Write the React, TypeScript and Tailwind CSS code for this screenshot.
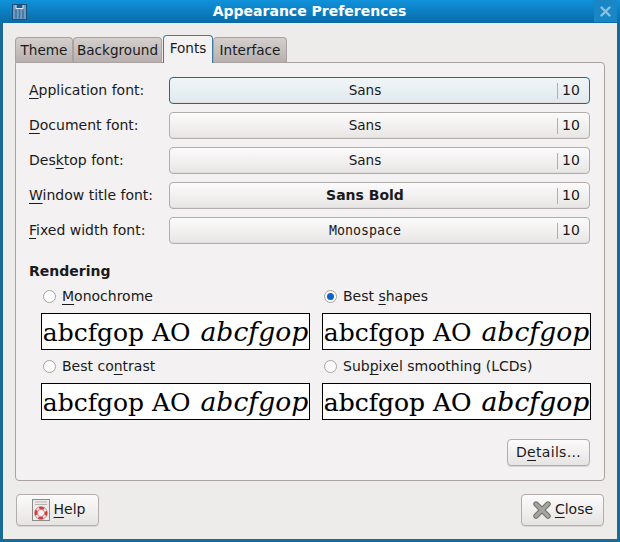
const sans = "font-['DejaVu_Sans',sans-serif]";

function U({ children }: { children: string }) {
  return <span className="underline decoration-1 underline-offset-[3px]">{children}</span>;
}

function Tab({ label, active, width }: { label: string; active?: boolean; width: string }) {
  if (active) {
    return (
      <div className={`relative z-10 -mb-px flex h-[28px] items-center justify-center rounded-t-[4px] border border-b-0 border-[#3b7ea5] bg-[#f3f1f2] pb-[2px] text-[13.6px] text-[#1a1a1a] ${width}`}>
        {label}
      </div>
    );
  }
  return (
    <div className={`flex h-[25px] items-center justify-center rounded-t-[4px] border border-b-0 border-[#a9a2a0] bg-gradient-to-b from-[#d4cfcd] to-[#b7b0ae] text-[13.6px] text-[#1a1a1a] ${width}`}>
      {label}
    </div>
  );
}

function FontRow({ label, font, bold, focus, mono }: { label: React.ReactNode; font: string; bold?: boolean; focus?: boolean; mono?: boolean }) {
  return (
    <div className="flex h-[27px] items-center">
      <div className="w-[140px] shrink-0 text-[14px] text-[#1a1a1a]">{label}</div>
      <div
        className={`flex h-[27px] w-[421px] items-center rounded-[4px] border shadow-[inset_0_-1px_0_#e0dedd] ${
          focus
            ? "border-[1.5px] border-[#1c6a97] bg-gradient-to-b from-[#f0f5f8] to-[#e1e9ee]"
            : "border-[#b3adab] bg-gradient-to-b from-[#fcfbfb] to-[#e8e6e5]"
        }`}
      >
        <div className={`flex-1 pl-[3px] text-center text-[#1a1a1a] ${bold ? "text-[14px] font-bold" : ""} ${mono ? "font-['DejaVu_Sans_Mono',monospace] text-[13.3px]" : "text-[13.6px]"}`}>
          {font}
        </div>
        <div className="h-[16px] w-px bg-[#b3adab]" />
        <div className="w-[31px] pl-[4px] text-left text-[14px] text-[#1a1a1a]">10</div>
      </div>
    </div>
  );
}

function Radio({ checked }: { checked?: boolean }) {
  return (
    <span className="flex h-[13px] w-[13px] shrink-0 items-center justify-center rounded-full border border-[#a8a3a1] bg-[#fdfdfd]">
      {checked && <span className="h-[7px] w-[7px] rounded-full bg-[#0f63c4]" />}
    </span>
  );
}

function Preview({ fringe }: { fringe?: boolean }) {
  return (
    <div
      className="flex h-[37px] w-[269px] items-baseline justify-center overflow-hidden whitespace-nowrap border border-black bg-white pt-[5px] font-['DejaVu_Serif',serif] text-[25px] leading-none text-black"
      style={fringe ? { textShadow: "0.4px 0 0 rgba(210,130,0,.25), -0.4px 0 0 rgba(0,100,210,.25)" } : undefined}
    >
      <span>abcfgop AO</span>
      <i className="ml-[10px] text-[26.6px]">abcfgop</i>
    </div>
  );
}

function Option({ label, checked, fringe }: { label: React.ReactNode; checked?: boolean; fringe?: boolean }) {
  return (
    <div className="flex flex-col">
      <div className="flex h-[33px] items-center gap-[6px] pl-[2px] text-[14px] text-[#1a1a1a]">
        <Radio checked={checked} />
        <span>{label}</span>
      </div>
      <Preview fringe={fringe} />
    </div>
  );
}

function PushButton({ children, className }: { children: React.ReactNode; className: string }) {
  return (
    <div className={`flex items-center justify-center rounded-[4px] border border-[#b3adab] bg-gradient-to-b from-[#fcfbfb] to-[#e6e4e3] text-[14px] text-[#1a1a1a] shadow-[0_1px_0_#d8d6d5] ${className}`}>
      {children}
    </div>
  );
}

function HelpIcon() {
  return (
    <svg width="18" height="22" viewBox="0 0 18 22" className="shrink-0">
      <rect x="0.5" y="0.5" width="17" height="21" fill="#eeecea" stroke="#8d8b88" />
      <path d="M3 3h12M3 5.5h12" stroke="#b5b3b0" strokeWidth="1" />
      <circle cx="9" cy="14" r="5" fill="none" stroke="#efeae8" strokeWidth="2.6" />
      <circle cx="9" cy="14" r="5" fill="none" stroke="#dd3b3b" strokeWidth="2.6" strokeDasharray="4.85 3" strokeDashoffset="2.4" />
      <circle cx="9" cy="14" r="6.3" fill="none" stroke="#b84a4a" strokeWidth="0.6" />
      <circle cx="9" cy="14" r="3.6" fill="#f4f2f0" stroke="#b84a4a" strokeWidth="0.6" />
    </svg>
  );
}

function CloseIcon() {
  return (
    <svg width="18" height="18" viewBox="0 0 18 18" className="shrink-0">
      <path d="M3 3 L15 15 M15 3 L3 15" stroke="#6f6f6a" strokeWidth="5.4" strokeLinecap="round" />
      <path d="M3 3 L15 15 M15 3 L3 15" stroke="#a5a59f" strokeWidth="3.4" strokeLinecap="round" />
    </svg>
  );
}

function WindowIcon() {
  return (
    <svg width="15" height="16" viewBox="0 0 15 16">
      <rect x="0.5" y="0.5" width="14" height="15" fill="#6f9cc4" stroke="#1c4d75" />
      <path d="M4 1v3.5h7V1" fill="#0f5f92" stroke="#dce8f0" strokeWidth="1" />
      <path d="M4 5.5v9M7.5 5.5v9M11 5.5v9" stroke="#41729b" strokeWidth="1.5" />
    </svg>
  );
}

export default function App() {
  return (
    <div className={`flex h-[542px] w-[620px] flex-col overflow-hidden bg-[#1a6a97] ${sans}`}>
      <div className="relative flex h-[23px] shrink-0 items-center justify-center bg-gradient-to-b from-[#0f92db] to-[#0a6ba8] pr-[1px] text-[14px] font-bold text-white">
        <div className="absolute left-[12px] top-[4px]"><WindowIcon /></div>
        Appearance Preferences
        <div className="absolute right-[3px] top-0 flex h-[22px] w-[23px] items-center justify-center bg-[#1a86c6]">
          <svg width="11" height="11" viewBox="0 0 11 11">
            <path d="M1.5 1.5 L9.5 9.5 M9.5 1.5 L1.5 9.5" stroke="#8fc1de" strokeWidth="2.4" strokeLinecap="round" />
          </svg>
        </div>
      </div>
      <div className="mx-[3px] mb-[3px] flex flex-1 flex-col bg-[#edeceb] px-[12px] pt-[12px]">
        <div className="flex h-[27px] items-end">
          <Tab label="Theme" width="w-[58px]" />
          <Tab label="Background" width="w-[89px]" />
          <div className="w-px" />
          <Tab label="Fonts" active width="w-[50px]" />
          <Tab label="Interface" width="w-[74px]" />
        </div>
        <div className="flex h-[419px] w-[590px] flex-col rounded-b-[4px] rounded-tr-[4px] border border-[#a9a2a0] bg-[#f3f1f2] pl-[13px] pt-[14px]">
          <div className="flex flex-col gap-[8px]">
            <FontRow label={<><U>A</U>pplication font:</>} font="Sans" focus />
            <FontRow label={<><U>D</U>ocument font:</>} font="Sans" />
            <FontRow label={<>Des<U>k</U>top font:</>} font="Sans" />
            <FontRow label={<><U>W</U>indow title font:</>} font="Sans Bold" bold />
            <FontRow label={<><U>F</U>ixed width font:</>} font="Monospace" mono />
          </div>
          <div className="mt-[19px] text-[14px] font-bold leading-[16px] text-[#1a1a1a]">Rendering</div>
          <div className="mt-[1px] grid w-[550px] grid-cols-[269px_269px] gap-x-[12px] pl-[12px]">
            <Option label={<><U>M</U>onochrome</>} />
            <Option label={<>Best <U>s</U>hapes</>} checked />
            <Option label={<>Best co<U>n</U>trast</>} />
            <Option label={<>Sub<U>p</U>ixel smoothing (LCDs)</>} fringe />
          </div>
          <div className="mt-[19px] flex w-[561px] justify-end">
            <PushButton className="h-[27px] w-[83px] tracking-[0.3px]"><span>D<U>e</U>tails…</span></PushButton>
          </div>
        </div>
        <div className="mt-[13px] flex justify-between pl-px pr-px">
          <PushButton className="h-[32px] w-[83px] gap-[4px] pb-[1px] pl-[2px]"><HelpIcon /><span><U>H</U>elp</span></PushButton>
          <PushButton className="h-[32px] w-[83px] gap-[4px] pb-[1px] pl-[1px]"><CloseIcon /><span><U>C</U>lose</span></PushButton>
        </div>
      </div>
    </div>
  );
}
